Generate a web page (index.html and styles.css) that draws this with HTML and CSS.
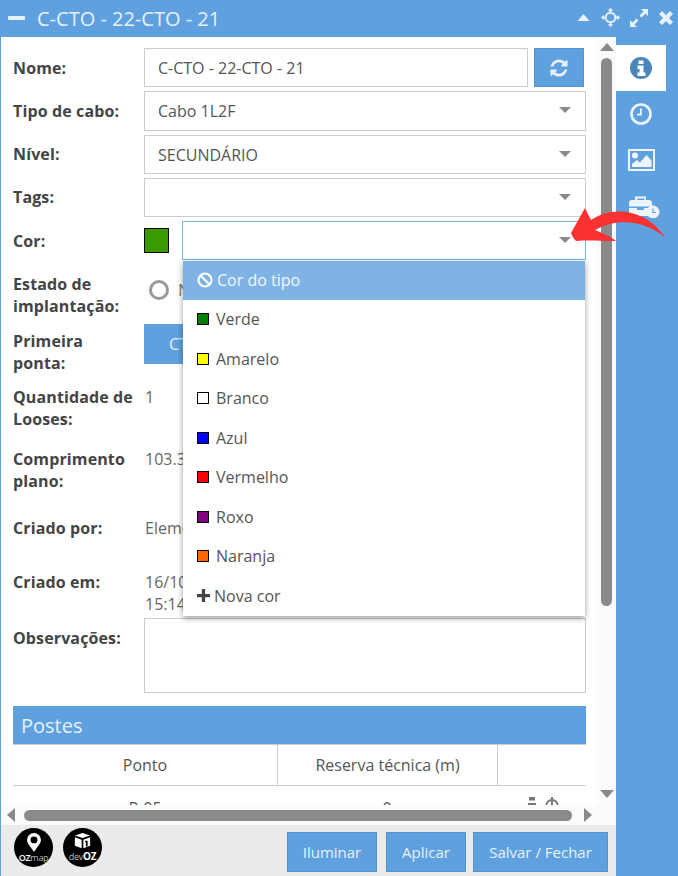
FILE: index.html
```html
<!DOCTYPE html>
<html lang="pt">
<head>
<meta charset="utf-8">
<title>C-CTO - 22-CTO - 21</title>
<link rel="stylesheet" href="styles.css">
</head>
<body>
<div class="window">
  <header class="titlebar">
    <span class="minimize"></span>
    <span class="title">C-CTO - 22-CTO - 21</span>
    <div class="title-tools">
      <svg class="tool-caret" viewBox="0 0 12 7"><path d="M6 0L12 7H0z"/></svg>
      <svg class="tool-move" viewBox="0 0 20 20"><path d="M10 0l3 3h-2v1.100A6 6 0 0 1 15.900 9H17V7l3 3-3 3v-2h-1.100A6 6 0 0 1 11 15.900V17h2l-3 3-3-3h2v-1.100A6 6 0 0 1 4.100 11H3v2l-3-3 3-3v2h1.100A6 6 0 0 1 9 4.100V3H7z M10 6a4 4 0 1 0 0 8a4 4 0 0 0 0-8z" fill-rule="evenodd"/></svg>
      <svg class="tool-expand" viewBox="0 0 18 18"><path d="M11 0h7v7l-2.500-2.500L11.500 8.500 9.500 6.500l4-4zM0 11l2.500 2.500 4-4 2 2-4 4L7 18H0z"/></svg>
      <svg class="tool-close" viewBox="0 0 14 14"><path d="M3 0l4 4 4-4 3 3-4 4 4 4-3 3-4-4-4 4-3-3 4-4-4-4z"/></svg>
    </div>
  </header>

  <div class="main">
    <section class="panel">
      <div class="scroll">
        <form class="content">
          <div class="row row-field">
            <label class="label">Nome:</label>
            <div class="input input-grow">C-CTO - 22-CTO - 21</div>
            <button type="button" class="btn-refresh">
              <svg viewBox="0 0 1792 1792"><path d="M1639 1056q0 5-1 7-64 268-268 434.500t-478 166.500q-146 0-282.500-55t-243.500-157l-129 129q-19 19-45 19t-45-19-19-45v-448q0-26 19-45t45-19h448q26 0 45 19t19 45-19 45l-137 137q71 66 161 102t187 36q134 0 250-65t186-179q11-17 53-117 8-23 30-23h192q13 0 22.500 9.500t9.500 22.500zm25-800v448q0 26-19 45t-45 19h-448q-26 0-45-19t-19-45 19-45l138-138q-148-137-349-137-134 0-250 65t-186 179q-11 17-53 117-8 23-30 23h-199q-13 0-22.500-9.500t-9.500-22.500v-7q65-268 270-434.500t480-166.500q146 0 284 55.500t245 156.500l130-129q19-19 45-19t45 19 19 45z"/></svg>
            </button>
          </div>
          <div class="row row-field">
            <label class="label">Tipo de cabo:</label>
            <div class="input select">Cabo 1L2F</div>
          </div>
          <div class="row row-field">
            <label class="label">Nível:</label>
            <div class="input select">SECUNDÁRIO</div>
          </div>
          <div class="row row-field">
            <label class="label">Tags:</label>
            <div class="input select"></div>
          </div>
          <div class="row row-field">
            <label class="label">Cor:</label>
            <span class="current-color"></span>
            <div class="input select select-open"></div>
          </div>

          <div class="row row-estado">
            <label class="label">Estado de<br>implantação:</label>
            <span class="radio"></span>
            <span class="radio-text">Não</span>
          </div>
          <div class="row row-ponta">
            <label class="label label-ponta">Primeira<br>ponta:</label>
            <button type="button" class="btn-ponta">CTO - 22</button>
          </div>
          <div class="row row-looses">
            <label class="label">Quantidade de<br>Looses:</label>
            <span class="value">1</span>
          </div>
          <div class="row row-comprimento">
            <label class="label">Comprimento<br>plano:</label>
            <span class="value">103.37 m</span>
          </div>
          <div class="row row-por">
            <label class="label">Criado por:</label>
            <span class="value">Elemento</span>
          </div>
          <div class="row row-em">
            <label class="label">Criado em:</label>
            <span class="value">16/10/2023<br>15:14</span>
          </div>
          <div class="row row-obs">
            <label class="label label-obs">Observações:</label>
            <div class="textarea"></div>
          </div>

          <h2 class="section-title">Postes</h2>
          <div class="table">
            <div class="thead">
              <div class="th th-a">Ponto</div>
              <div class="th th-b">Reserva técnica (m)</div>
              <div class="th th-c"></div>
            </div>
            <div class="tbody">
              <div class="td th-a">P-05</div>
              <div class="td th-b">0</div>
              <div class="td th-c">
                <svg class="row-icons" viewBox="0 0 34 16"><path d="M2 0h6v3.500H2zM1 6h8v3H1z"/><circle cx="25" cy="9" r="6" fill="none" stroke="#777" stroke-width="1.800"/><path d="M24 0h2v9h-2z"/></svg>
              </div>
            </div>
          </div>
        </form>

        <div class="dropdown">
          <div class="opt opt-active">
            <svg class="ban" viewBox="0 0 16 16"><circle cx="8" cy="8" r="6.500" fill="none" stroke="#fff" stroke-width="2.200"/><path d="M3.500 3.500l9 9" stroke="#fff" stroke-width="2.200"/></svg>
            <span>Cor do tipo</span>
          </div>
          <div class="opt"><i class="sw sw-verde"></i>Verde</div>
          <div class="opt"><i class="sw sw-amarelo"></i>Amarelo</div>
          <div class="opt"><i class="sw sw-branco"></i>Branco</div>
          <div class="opt"><i class="sw sw-azul"></i>Azul</div>
          <div class="opt"><i class="sw sw-vermelho"></i>Vermelho</div>
          <div class="opt"><i class="sw sw-roxo"></i>Roxo</div>
          <div class="opt"><i class="sw sw-naranja"></i>Naranja</div>
          <div class="opt">
            <svg class="plus" viewBox="0 0 12 12"><path d="M4.500 0h3v4.500H12v3H7.500V12h-3V7.500H0v-3h4.500z"/></svg>
            <span>Nova cor</span>
          </div>
        </div>

        <div class="vbar">
          <svg class="sb-arrow" viewBox="0 0 14 8"><path d="M7 0l7 8H0z"/></svg>
          <div class="vthumb"></div>
          <svg class="sb-arrow sb-arrow-down" viewBox="0 0 14 8"><path d="M7 8L0 0h14z"/></svg>
        </div>
        <div class="hbar">
          <svg class="sb-arrow-h" viewBox="0 0 8 14"><path d="M0 7l8-7v14z"/></svg>
          <div class="hthumb"></div>
          <svg class="sb-arrow-h" viewBox="0 0 8 14"><path d="M8 7L0 14V0z"/></svg>
        </div>
      </div>

      <footer class="footer">
        <div class="logo">
          <svg class="logo-pin" viewBox="0 0 16 22"><path d="M8 0a8 8 0 0 1 8 8c0 4-3 6-8 14C3 14 0 12 0 8a8 8 0 0 1 8-8zm0 4a4 4 0 1 0 0 8a4 4 0 0 0 0-8z" fill="#fff" fill-rule="evenodd"/></svg>
          <span class="logo-text">OZ<small>map</small></span>
        </div>
        <div class="logo">
          <svg class="logo-box" viewBox="0 0 20 20"><path d="M10 0l9 3-9 3-9-3zM1 5l8 3v10l-8-3zM11 8l8-3v10l-8 3z" fill="#fff"/><path d="M13 9h3v7h-2v-5h-1z" fill="#000"/></svg>
          <span class="logo-text logo-text-dev"><small>dev</small>OZ</span>
        </div>
        <div class="actions">
          <button type="button" class="btn btn-a">Iluminar</button>
          <button type="button" class="btn btn-b">Aplicar</button>
          <button type="button" class="btn btn-c">Salvar / Fechar</button>
        </div>
      </footer>
    </section>

    <nav class="tabs">
      <div class="tab tab-active">
        <svg viewBox="0 0 22 22"><circle cx="11" cy="11" r="11" fill="#4a86ba"/><path d="M8.500 3.500h5v3.500h-5zM7.500 8.500h6v7h2v3.500h-8v-3.500h2v-3.500h-2z" fill="#fff"/></svg>
      </div>
      <div class="tab">
        <svg viewBox="0 0 22 22"><circle cx="11" cy="11" r="9.500" fill="none" stroke="#eef4fb" stroke-width="2.600"/><path d="M11.800 5.500v7H7v-1.800h3V5.500z" fill="#eef4fb"/></svg>
      </div>
      <div class="tab">
        <svg class="icon-image" viewBox="0 0 27 22"><path d="M0 0h27v22H0zM2 2v18h23V2z" fill="#eef4fb" fill-rule="evenodd"/><circle cx="7" cy="6.500" r="3" fill="#eef4fb"/><path d="M4 18v-3l5-4 3 2.500L18.500 6l5 5.500V18z" fill="#eef4fb"/></svg>
      </div>
      <div class="tab">
        <svg class="icon-case" viewBox="0 0 32 24"><path d="M9 2.500h9V6h3a3 3 0 0 1 3 3v3.500H1V9a3 3 0 0 1 3-3h3V2.500zM9.500 4.500V6h7V4.500zM1 14h8v2h7v-2h5a7 7 0 0 0 0 8H4a3 3 0 0 1-3-3z" fill="#eef4fb"/><circle cx="25" cy="18" r="6.500" fill="#eef4fb"/><path d="M25 14.500v4h3" fill="none" stroke="#5fa1de" stroke-width="1.200"/></svg>
      </div>
    </nav>
  </div>

  <svg class="red-arrow" viewBox="0 0 100 40">
    <path d="M3 25 L17 0 L23 12 C42 -1 75 -2 97 29 L97 29.500 C78 13 50 9 27 22 C35 25 43 29 48 33 C32 33 20 32 8 33 C6 31 4 28 3 25Z"/>
  </svg>
</div>
</body>
</html>
```

FILE: styles.css
```css
* { box-sizing: border-box; }
html, body { margin: 0; padding: 0; }
body { font-family: "Open Sans", "Noto Sans", sans-serif; font-size: 16px; color: #555; background: #5fa1de; }

.window { position: relative; width: 678px; height: 876px; display: flex; flex-direction: column; background: #5fa1de; overflow: hidden; }

.titlebar { height: 37px; flex: none; display: flex; align-items: center; padding: 0 5px 0 8px; color: #e8f1fa; }
.minimize { width: 17px; height: 4px; border-radius: 1px; background: #e8f1fa; margin-top: -2px; }
.title { font-size: 20px; margin-left: 12px; margin-top: -1px; }
.title-tools { margin-left: auto; display: flex; align-items: center; margin-top: -2px; }
.title-tools svg { fill: #e8f1fa; display: block; }
.tool-caret { width: 13px; height: 7px; }
.tool-move { width: 19px; height: 19px; margin-left: 11px; }
.tool-expand { width: 18px; height: 18px; margin-left: 10px; }
.tool-close { width: 14px; height: 14px; margin-left: 11px; }

.main { flex: 1; display: flex; min-height: 0; }
.panel { width: 615px; margin-left: 1px; flex: none; display: flex; flex-direction: column; background: #fff; }
.tabs { flex: 1; display: flex; flex-direction: column; padding-top: 8px; }
.tab { width: 50px; height: 46px; display: flex; align-items: center; justify-content: center; }
.tab svg { width: 22px; height: 22px; display: block; }
.tab-active { background: #fff; }
.tab .icon-image { width: 27px; height: 22px; }
.tab .icon-case { width: 32px; height: 24px; margin-left: 5px; }

.scroll { position: relative; height: 788px; flex: none; overflow: hidden; background: #fff; }
.content { padding: 11px 30px 0 12px; }

.row { display: flex; align-items: flex-start; }
.label { width: 131px; flex: none; font-weight: 700; color: #444; line-height: 22px; white-space: nowrap; letter-spacing: 0.12px; }
.row-field { height: 39.250px; margin-bottom: 4px; align-items: center; }
.row-field:nth-child(5) { margin-bottom: 0; }

.input { height: 100%; border: 1px solid #ccc; padding: 0 13px; line-height: 38px; color: #555; background: #fff; flex: 1; position: relative; }
.input-grow { margin-right: 6px; }
.select::after { content: ""; position: absolute; right: 14px; top: 15px; border: 6.500px solid transparent; border-top: 6.500px solid #8a8a8a; border-bottom: 0; }
.select-open { border-color: #7fb3e3; }
.current-color { width: 25px; height: 25px; border: 1px solid #000; background: #3a9a00; flex: none; margin-right: 13px; }

.btn-refresh { width: 50px; height: 100%; flex: none; border: 1px solid #5592cc; background: #5fa1de; padding: 0; display: flex; align-items: center; justify-content: center; margin-right: 2px; }
.btn-refresh svg { width: 20px; height: 20px; fill: #e8f1fa; }

.row-estado { margin-top: 13px; height: 44px; align-items: flex-start; }
.radio { width: 20px; height: 20px; border-radius: 50%; border: 3px solid #999; background: #fff; margin: 7px 0 0 5px; flex: none; }
.radio-text { margin-left: 9px; line-height: 22px; margin-top: 6px; color: #777; white-space: nowrap; }
.row-ponta { margin-top: 7px; height: 49px; }
.label-ponta { padding-top: 6px; }
.btn-ponta { width: 300px; flex: none; height: 40px; border: 0; background: #5fa1de; color: #e8f1fa; font: inherit; text-align: left; padding: 0 0 0 25px; }
.row-looses { margin-top: 13px; height: 43px; }
.row-comprimento { margin-top: 19px; height: 44px; }
.row-por { margin-top: 25px; height: 22px; }
.row-em { margin-top: 32px; height: 44px; }
.value { line-height: 22px; color: #666; white-space: nowrap; padding-left: 1px; }
.row-obs { margin-top: 3px; height: 75px; }
.label-obs { padding-top: 9px; }
.textarea { flex: 1; height: 100%; border: 1px solid #ccc; }

.section-title { margin: 13px 0 0; height: 38px; background: #5fa1de; color: #e8f1fa; font-size: 20px; font-weight: 400; line-height: 39px; padding-left: 8px; }
.table { border-top: 1px solid #ccc; }
.thead { display: flex; height: 41px; border-bottom: 1px solid #ccc; }
.th { line-height: 40px; text-align: center; color: #555; }
.th-a { width: 264px; flex: none; }
.th-b { width: 220px; flex: none; border-left: 1px solid #ccc; }
.th-c { flex: 1; border-left: 1px solid #ccc; }
.tbody { display: flex; height: 40px; }
.td { line-height: 44px; text-align: center; color: #555; border: 0; }
.row-icons { width: 34px; height: 16px; fill: #777; margin-top: 11px; display: block; margin-left: 30px; }

.dropdown { position: absolute; left: 182px; top: 224px; width: 402px; height: 355px; background: #fff; box-shadow: 0 2px 6px rgba(0,0,0,.4); display: flex; flex-direction: column; }
.opt { height: 39.500px; flex: none; display: flex; align-items: center; padding: 0 0 1px 14px; color: #555; }
.opt-active { background: #7fb3e3; color: #f2f7fc; height: 39px; }
.sw { width: 12px; height: 12px; border: 1px solid #000; margin-right: 7px; flex: none; }
.sw-verde { background: #008000; }
.sw-amarelo { background: #ffff00; }
.sw-branco { background: #fff; }
.sw-azul { background: #0000ff; }
.sw-vermelho { background: #ff0000; }
.sw-roxo { background: #800080; }
.sw-naranja { background: #ff6600; }
.ban { width: 16px; height: 16px; margin-right: 4px; flex: none; }
.plus { width: 13px; height: 13px; margin-right: 4px; fill: #444; flex: none; }

.vbar { position: absolute; right: 0; top: 0; bottom: 0; width: 19px; background: #fbfbfb; display: flex; flex-direction: column; align-items: center; padding-top: 6px; }
.sb-arrow { width: 14px; height: 8px; fill: #8a8a8a; flex: none; }
.vthumb { width: 11px; height: 548px; margin-top: 7px; border-radius: 6px; background: #8a8a8a; flex: none; }
.sb-arrow-down { margin-top: 184px; }
.hbar { position: absolute; left: 0; right: 19px; bottom: 0; height: 20px; background: #fbfbfb; display: flex; align-items: center; padding: 0 7px 0 6px; }
.sb-arrow-h { width: 8px; height: 14px; fill: #8a8a8a; flex: none; }
.hthumb { width: 548px; height: 11px; border-radius: 6px; background: #8a8a8a; margin: 0 12px 0 9px; flex: none; }

.footer { flex: 1; background: #ebebeb; display: flex; align-items: flex-start; padding: 3px 8px 0 13px; }
.logo { width: 39px; height: 39px; border-radius: 50%; background: #000; margin-right: 10px; flex: none; display: flex; flex-direction: column; align-items: center; color: #fff; padding-top: 5px; }
.logo-pin { width: 14px; height: 19px; display: block; }
.logo-box { width: 17px; height: 17px; display: block; }
.logo-text { font-size: 9px; line-height: 11px; font-weight: 600; white-space: nowrap; letter-spacing: -0.3px; }
.logo-text small { font-size: 9px; font-weight: 400; color: #bbb; }
.logo-text-dev { font-weight: 700; font-size: 10px; margin-top: 1px; }
.actions { margin-left: auto; display: flex; padding-top: 4px; }
.btn { height: 40px; border: 1px solid #5592cc; background: #5fa1de; color: #e8f1fa; font: inherit; font-size: 15px; padding: 0; }
.btn-a { width: 90px; }
.btn-b { width: 80px; margin-left: 9px; }
.btn-c { width: 135px; margin-left: 7px; }

.red-arrow { position: absolute; left: 568px; top: 208px; width: 100px; height: 40px; fill: #f93131; }
```
